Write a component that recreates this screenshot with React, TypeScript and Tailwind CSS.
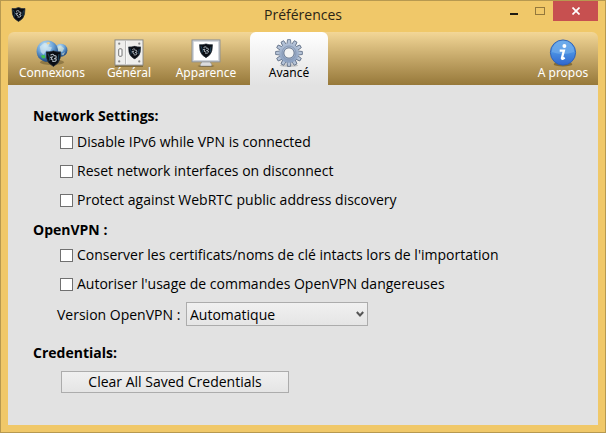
import { useState, type ReactNode } from 'react';

function Shield({ className }: { className?: string }) {
  return (
    <svg viewBox="0 0 28 30" className={className} aria-hidden="true">
      <path d="M1 3Q8 4 14 1q6 3 13 2l-1 11q-1 9-12 15Q3 23 2 14Z" fill="#0a0d13" stroke="#28313b" strokeWidth="1.5" />
      <path d="M4 6q5 9 2 13M24 7q-2 8-1 11" stroke="#1d4058" strokeWidth="2" fill="none" />
      <path d="M9 9q3-3 6-1M8 13l4-1-2 4 4 2M14 10q5-1 5 2t-4 3q5 0 4 3t-7 2" stroke="#a9b3bb" strokeWidth="2" fill="none" />
    </svg>
  );
}

function GlobesIcon() {
  return (
    <svg viewBox="0 0 34 30" className="h-7 w-8" aria-hidden="true">
      <defs>
        <radialGradient id="globe" cx="40%" cy="25%" r="75%">
          <stop offset="0" stopColor="#c6e6f8" />
          <stop offset="0.5" stopColor="#6ca3d8" />
          <stop offset="1" stopColor="#1c477f" />
        </radialGradient>
      </defs>
      <ellipse cx="17" cy="25" rx="13" ry="3" fill="#3b3010" opacity="0.35" />
      <circle cx="26.500" cy="12" r="7" fill="url(#globe)" />
      <path d="M22 9l4-2 4 3-2 4-4-1zM27 16l4-2-2 4z" fill="#dce4cf" opacity="0.6" />
      <circle cx="12" cy="13" r="11.500" fill="url(#globe)" />
      <path d="M4 8l5-4 5 1-1 3 4 1-2 4-4-1-3 5-3-3z" fill="#dcecf2" opacity="0.6" />
      <path d="M11 4l3-1 1 2-3 1z" fill="#efcf8b" />
      <path d="M5 18l4-1 1 3-3 1z" fill="#3fc14b" />
      <svg x="10" y="12" width="17" height="18">
        <Shield />
      </svg>
    </svg>
  );
}

function SwitchIcon() {
  return (
    <svg viewBox="0 0 32 30" className="h-7 w-[30px]" aria-hidden="true">
      <path d="M1 29h30" stroke="#4d3d15" strokeWidth="2" opacity="0.5" />
      <rect x="1" y="1" width="30" height="27" fill="#eeeeec" stroke="#858583" />
      <path d="M12.500 2v25" stroke="#aaa" />
      <path d="M13.500 2v25" stroke="#fff" />
      <g fill="#888">
        <circle cx="5.500" cy="5" r="1.200" />
        <circle cx="5.500" cy="24" r="1.200" />
        <circle cx="27" cy="5" r="1.200" />
        <circle cx="27" cy="24" r="1.200" />
      </g>
      <rect x="5" y="10.500" width="3.500" height="8" rx="1" fill="#fff" stroke="#666" />
      <svg x="15" y="7" width="14" height="15">
        <Shield />
      </svg>
    </svg>
  );
}

function MonitorIcon() {
  return (
    <svg viewBox="0 0 32 30" className="h-7 w-[30px]" aria-hidden="true">
      <ellipse cx="16" cy="29" rx="9" ry="1" fill="#3b3010" opacity="0.5" />
      <path d="M12 24h8l2 3v2H10v-2z" fill="#dcdcdc" stroke="#888" strokeWidth="0.600" />
      <rect x="1" y="1" width="30" height="23.500" fill="#cfd4da" stroke="#8b9096" />
      <rect x="3" y="3" width="26" height="19.500" fill="#fff" />
      <svg x="8.500" y="4.500" width="15" height="16">
        <Shield />
      </svg>
    </svg>
  );
}

const teeth = [0, 30, 60, 90, 120, 150, 180, 210, 240, 270, 300, 330];

function GearIcon() {
  return (
    <svg viewBox="0 0 30 30" className="size-7" aria-hidden="true">
      <defs>
        <linearGradient id="gear" x1="0" y1="0" x2="0" y2="30" gradientUnits="userSpaceOnUse">
          <stop offset="0" stopColor="#bac7da" />
          <stop offset="1" stopColor="#8198bb" />
        </linearGradient>
      </defs>
      <ellipse cx="15" cy="28.500" rx="10" ry="1.500" fill="#999" opacity="0.5" />
      <g fill="url(#gear)" stroke="#5c6b83" strokeWidth="0.900">
        {teeth.map((angle) => (
          <path key={angle} d="M12.800 6l.6-5.300h3.200l.6 5.300z" transform={`rotate(${angle} 15 15)`} />
        ))}
      </g>
      <circle cx="15" cy="15" r="10.500" fill="url(#gear)" />
      <circle cx="15" cy="15" r="7.500" fill="none" stroke="#8597b4" strokeWidth="1" />
      <circle cx="15" cy="15" r="5.500" fill="#f3f3f3" stroke="#66758d" />
    </svg>
  );
}

function InfoIcon() {
  return (
    <svg viewBox="0 0 30 30" className="size-7" aria-hidden="true">
      <defs>
        <linearGradient id="info" x1="0" y1="0" x2="0" y2="1">
          <stop offset="0" stopColor="#5a9fe6" />
          <stop offset="0.500" stopColor="#4a90e2" />
          <stop offset="1" stopColor="#2f66cf" />
        </linearGradient>
      </defs>
      <ellipse cx="15" cy="27" rx="10" ry="2.500" fill="#4b3b13" opacity="0.5" />
      <circle cx="15" cy="14.500" r="13.500" fill="url(#info)" stroke="#2d5fb4" />
      <path d="M3 14a12 12 0 0 1 24 0q-12 4-24 0" fill="#8fc0f2" opacity="0.4" />
      <circle cx="16.500" cy="7.500" r="2.100" fill="#fff" />
      <path d="M11.500 12.500H16l-2.200 8q0 1.700 3-.5" stroke="#fff" strokeWidth="2.400" fill="none" />
    </svg>
  );
}

type TabProps = { icon: ReactNode; label: string; width: string; active: boolean; onClick: () => void };

function Tab({ icon, label, width, active, onClick }: TabProps) {
  return (
    <button
      type="button"
      role="tab"
      aria-selected={active}
      onClick={onClick}
      className={`flex flex-col items-center pt-[7px] text-[12px] leading-4 ${width} ${
        active ? 'rounded-t-md bg-linear-to-b from-white to-[#e2e2e2] text-black' : 'text-white'
      }`}
    >
      {icon}
      <span className="-mt-[2px] font-['Noto_Sans',sans-serif] whitespace-nowrap">{label}</span>
    </button>
  );
}

function Option({ label }: { label: string }) {
  return (
    <label className="flex items-center gap-1 leading-5">
      <input type="checkbox" className="size-[13px] shrink-0 appearance-none border border-[#707070] bg-white checked:bg-[#4a90e2]" />
      {label}
    </label>
  );
}

const tabs = [
  { label: 'Connexions', icon: <GlobesIcon />, width: 'w-[88px]' },
  { label: 'Général', icon: <SwitchIcon />, width: 'w-[66px]' },
  { label: 'Apparence', icon: <MonitorIcon />, width: 'w-[88px]' },
  { label: 'Avancé', icon: <GearIcon />, width: 'w-[78px]' },
];

export default function App() {
  const [active, setActive] = useState('Avancé');

  return (
    <div className="flex min-h-screen flex-col border border-[#b79950] bg-[#f0c869] px-[7px] pb-[7px] font-['Open_Sans','Noto_Sans',sans-serif] text-[14px] text-black">
      {/* Title bar */}
      <header className="grid h-[31px] grid-cols-[1fr_auto_1fr] items-start">
        <Shield className="mt-[6px] ml-[3px] size-[15px]" />
        <h1 className="pt-1 leading-5 text-[#2b2415]">Préférences</h1>
        <div className="flex justify-end">
          <button type="button" aria-label="Minimize" className="flex h-5 w-[27px] items-center justify-center">
            <span className="mt-[5px] h-[2px] w-2 bg-[#1f1b12]" />
          </button>
          <button type="button" aria-label="Maximize" disabled className="flex h-5 w-[26px] items-center justify-center">
            <span className="h-2 w-[10px] border border-[#93783c]" />
          </button>
          <button type="button" aria-label="Close" className="flex h-5 w-[45px] items-center justify-center bg-[#c75050]">
            <svg viewBox="0 0 8 8" className="size-2" aria-hidden="true">
              <path d="M.5.5l7 7M7.500.5l-7 7" stroke="#fff" strokeWidth="1.700" />
            </svg>
          </button>
        </div>
      </header>

      {/* Toolbar */}
      <div role="tablist" className="flex h-[53px] rounded-t-md bg-linear-to-b from-[#f3d797] to-[#97793a]">
        {tabs.map((tab) => (
          <Tab key={tab.label} {...tab} active={active === tab.label} onClick={() => setActive(tab.label)} />
        ))}
        <div className="flex-1" />
        <Tab
          icon={<InfoIcon />}
          label="A propos"
          width="w-[70px]"
          active={active === 'A propos'}
          onClick={() => setActive('A propos')}
        />
      </div>

      {/* Advanced settings */}
      <main className="flex-1 bg-[#e2e2e2] px-[25px] pt-[21px] pb-8">
        <section>
          <h2 className="leading-5 font-bold">Network Settings:</h2>
          <div className="mt-[6px] flex flex-col gap-[9px] pl-[27px]">
            <Option label="Disable IPv6 while VPN is connected" />
            <Option label="Reset network interfaces on disconnect" />
            <Option label="Protect against WebRTC public address discovery" />
          </div>
        </section>

        <section className="mt-[10px]">
          <h2 className="leading-5 font-bold">OpenVPN :</h2>
          <div className="mt-[5px] flex flex-col gap-[9px] pl-[27px]">
            <Option label="Conserver les certificats/noms de clé intacts lors de l'importation" />
            <Option label="Autoriser l'usage de commandes OpenVPN dangereuses" />
          </div>
          <div className="mt-2 flex items-center pl-6">
            <label htmlFor="version" className="w-[129px]">
              Version OpenVPN :
            </label>
            <div className="relative">
              <select
                id="version"
                className="h-6 w-[182px] appearance-none border border-[#acacac] bg-linear-to-b from-[#f0f0f0] to-[#e5e5e5] pl-[3px]"
              >
                <option>Automatique</option>
              </select>
              <svg viewBox="0 0 8 7" className="pointer-events-none absolute top-[9px] right-1 h-[7px] w-2" aria-hidden="true">
                <path d="M.8 1L4 4.500 7.200 1" stroke="#555" strokeWidth="2" fill="none" />
              </svg>
            </div>
          </div>
        </section>

        <section className="mt-[17px]">
          <h2 className="leading-5 font-bold">Credentials:</h2>
          <button
            type="button"
            className="mt-2 ml-7 h-[22px] w-[228px] border border-[#acacac] bg-linear-to-b from-[#f0f0f0] to-[#e5e5e5] leading-5"
          >
            Clear All Saved Credentials
          </button>
        </section>
      </main>
    </div>
  );
}
